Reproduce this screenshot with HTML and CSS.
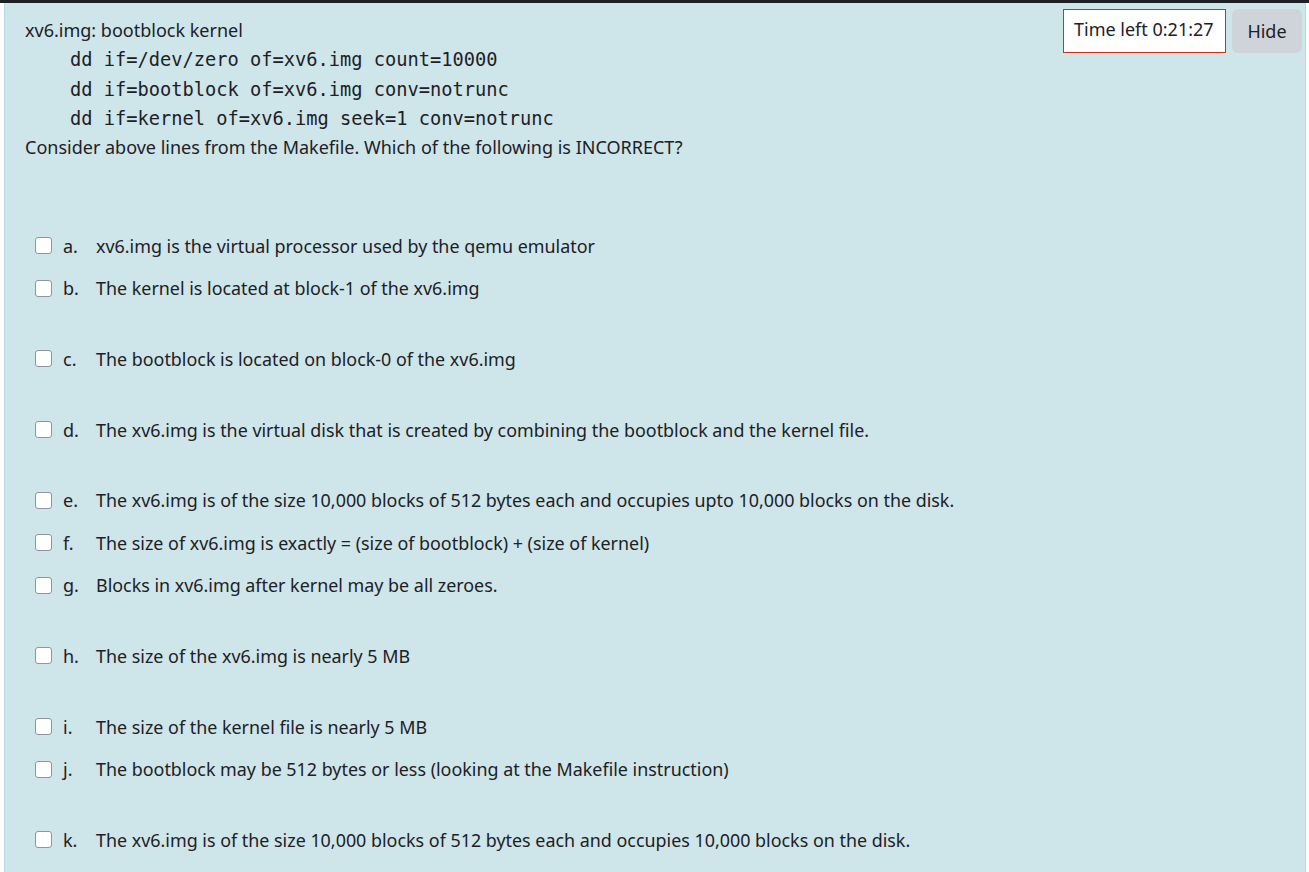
FILE: index.html
```html
<!DOCTYPE html>
<html>
<head>
<meta charset="utf-8">
<link rel="stylesheet" href="styles.css">
</head>
<body>
<div class="topbar"></div>
<div class="page">
  <div class="panel">
    <div class="qtext">
      <div class="line">xv6.img: bootblock kernel</div>
      <div class="line mono">dd if=/dev/zero of=xv6.img count=10000</div>
      <div class="line mono">dd if=bootblock of=xv6.img conv=notrunc</div>
      <div class="line mono">dd if=kernel of=xv6.img seek=1 conv=notrunc</div>
      <div class="line">Consider above lines from the Makefile. Which of the following is INCORRECT?</div>
    </div>
    <div class="answers">
      <div class="opt"><span class="box"></span><span class="let">a.</span><span class="txt">xv6.img is the virtual processor used by the qemu emulator</span></div>
      <div class="opt gap"><span class="box"></span><span class="let">b.</span><span class="txt">The kernel is located at block-1 of the xv6.img</span></div>
      <div class="opt gap"><span class="box"></span><span class="let">c.</span><span class="txt">The bootblock is located on block-0 of the xv6.img</span></div>
      <div class="opt gap"><span class="box"></span><span class="let">d.</span><span class="txt">The xv6.img is the virtual disk that is created by combining the bootblock and the kernel file.</span></div>
      <div class="opt"><span class="box"></span><span class="let">e.</span><span class="txt">The xv6.img is of the size 10,000 blocks of 512 bytes each and occupies upto 10,000 blocks on the disk.</span></div>
      <div class="opt"><span class="box"></span><span class="let">f.</span><span class="txt">The size of xv6.img is exactly = (size of bootblock) + (size of kernel)</span></div>
      <div class="opt gap"><span class="box"></span><span class="let">g.</span><span class="txt">Blocks in xv6.img after kernel may be all zeroes.</span></div>
      <div class="opt gap"><span class="box"></span><span class="let">h.</span><span class="txt">The size of the xv6.img is nearly 5 MB</span></div>
      <div class="opt"><span class="box"></span><span class="let">i.</span><span class="txt">The size of the kernel file is nearly 5 MB</span></div>
      <div class="opt gap"><span class="box"></span><span class="let">j.</span><span class="txt">The bootblock may be 512 bytes or less (looking at the Makefile instruction)</span></div>
      <div class="opt"><span class="box"></span><span class="let">k.</span><span class="txt">The xv6.img is of the size 10,000 blocks of 512 bytes each and occupies 10,000 blocks on the disk.</span></div>
    </div>
  </div>
  <div class="timerwrap">
    <div class="timer">Time left 0:21:27</div>
    <button class="hide">Hide</button>
  </div>
</div>
</body>
</html>
```
FILE: styles.css
```css
html, body {
  margin: 0;
  padding: 0;
  background: #ffffff;
}
body {
  font-family: "Noto Sans", "Open Sans", sans-serif;
  font-size: 18px;
  color: #1d2125;
  height: 872px;
  overflow: hidden;
}
.topbar {
  height: 3px;
  background: #1d2125;
}
.page {
  position: relative;
  padding-left: 4px;
  padding-right: 3px;
  height: 869px;
}
.panel {
  background: #cee5ea;
  border-left: 1px solid #b4dbe2;
  border-right: 1px solid #b4dbe2;
  height: 100%;
  padding: 13px 20px 0 20px;
  box-sizing: border-box;
}
.line {
  height: 29.3px;
  line-height: 29.3px;
  white-space: nowrap;
}
.mono {
  font-family: "DejaVu Sans Mono", monospace;
  font-size: 18.7px;
  padding-left: 45px;
}
.answers {
  margin-top: 62px;
  padding-left: 10px;
}
.opt {
  display: flex;
  align-items: center;
  height: 42.5px;
  white-space: nowrap;
}
.opt.gap {
  margin-bottom: 28.2px;
}
.box {
  width: 15px;
  height: 15px;
  border: 1px solid #8f959e;
  border-radius: 3px;
  background: #fff;
  flex: none;
}
.let {
  margin-left: 11px;
  width: 33px;
}
.txt {
  font-size: 17.9px;
}
.timerwrap {
  position: absolute;
  top: 6px;
  right: 7px;
  display: flex;
  gap: 6px;
}
.timer {
  height: 42px;
  width: 161px;
  box-sizing: content-box;
  border: 1px solid #ca3120;
  background: #fff;
  padding: 0;
  text-indent: 10px;
  line-height: 38px;
  font-size: 18px;
  white-space: nowrap;
}
.hide {
  height: 44px;
  width: 70px;
  border: none;
  border-radius: 6px;
  background: #ced4da;
  color: #1d2125;
  font-family: "Noto Sans", "Open Sans", sans-serif;
  font-size: 18px;
  padding: 0;
  margin: 0;
}
```
